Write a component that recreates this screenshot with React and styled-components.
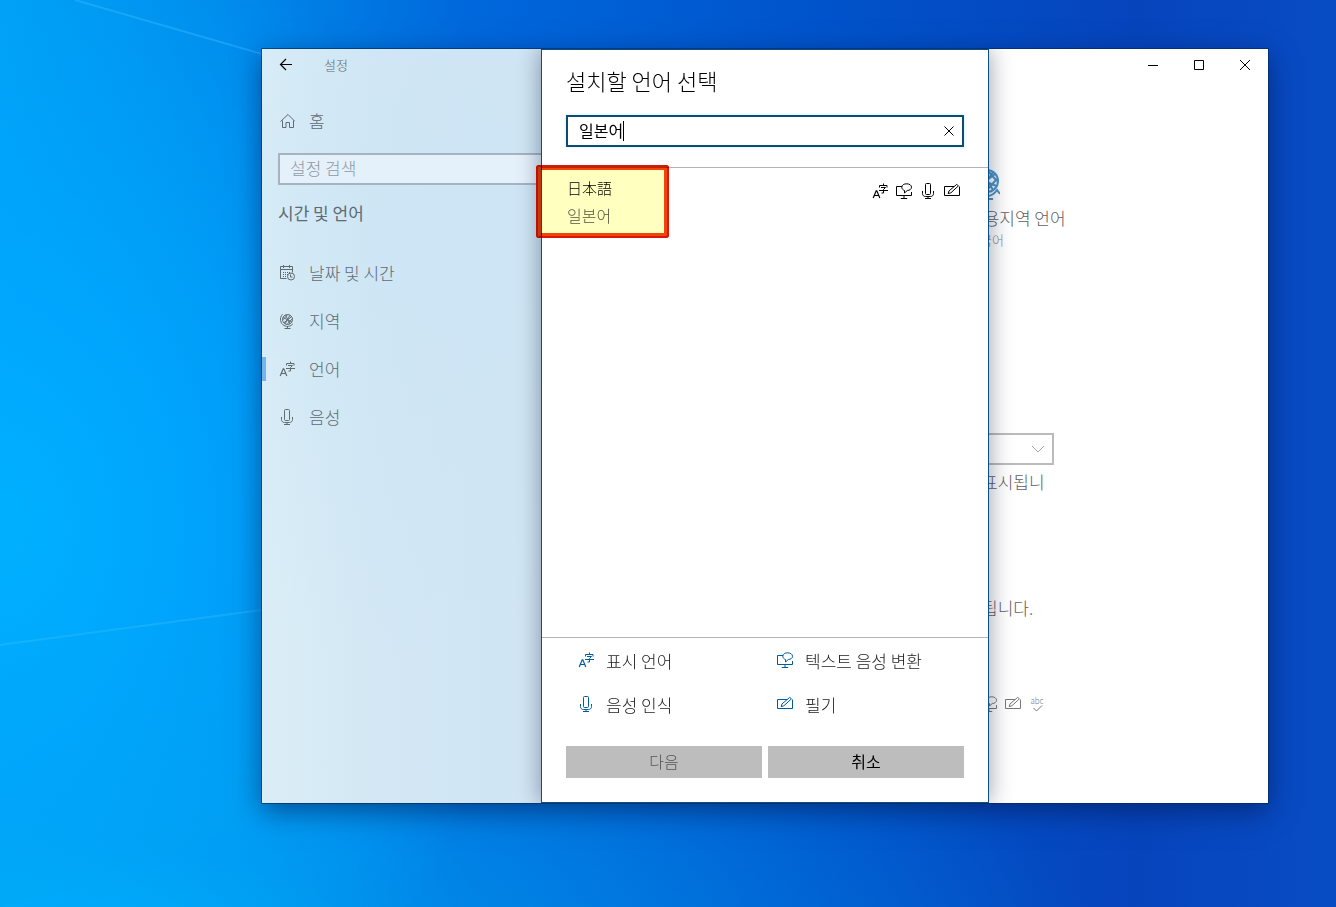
import React, { useState } from 'react';
import styled, { createGlobalStyle, css } from 'styled-components';

const GlobalStyle = createGlobalStyle`
  * {
    box-sizing: border-box;
  }
  body {
    margin: 0;
    font-family: 'Noto Sans CJK KR', 'Noto Sans', sans-serif;
    font-weight: 300;
  }
  button, input, select {
    font: inherit;
    color: inherit;
  }
`;

const flexCenter = css`
  display: flex;
  align-items: center;
`;

const plainButton = css`
  padding: 0;
  border: 0;
  background: none;
  cursor: pointer;
`;

const Desktop = styled.div`
  position: relative;
  display: flex;
  min-height: 100vh;
  padding: 49px 68px 104px 262px;
  background:
    radial-gradient(ellipse 520px 640px at 0% 58%, #00b0ff 0%, rgba(0, 168, 255, 0.85) 35%, rgba(0, 140, 245, 0) 100%),
    radial-gradient(ellipse 1100px 360px at 0% 106%, rgba(0, 184, 245, 0.95) 0%, rgba(0, 160, 240, 0.6) 35%, rgba(0, 120, 225, 0) 100%),
    linear-gradient(90deg, #00a0f4 0%, #0088ea 18%, #0068dc 35%, #0054cc 60%, #0644bc 85%, #084cc4 100%);
`;

const Rays = styled.svg`
  position: absolute;
  inset: 0;
  width: 100%;
  height: 100%;
`;

const Window = styled.div`
  position: relative;
  display: flex;
  flex: 1;
  background: #fff;
  box-shadow: 0 0 0 1px rgba(0, 40, 90, 0.6), 0 8px 26px rgba(0, 20, 70, 0.55);
`;

const Sidebar = styled.aside`
  flex: 0 0 320px;
  color: #606a73;
  background:
    radial-gradient(ellipse 320px 420px at 40% 25%, rgba(200, 228, 245, 0.5), rgba(200, 228, 245, 0)),
    linear-gradient(90deg, #dbeef7 0%, #d3e7f4 35%, #d0e5f4 75%, #d6e8f4 100%);
`;

const TitleBar = styled.div`
  ${flexCenter}
  height: 32px;
  font-size: 13px;
  justify-content: ${(props) => (props.$end ? 'flex-end' : 'flex-start')};
`;

const WindowTitle = styled.span`
  padding-bottom: 2px;
`;

const BackButton = styled.button`
  ${plainButton}
  ${flexCenter}
  justify-content: center;
  width: 48px;
  height: 32px;
  margin-right: 14px;
  color: #000;
`;

const CaptionButton = styled.button`
  ${plainButton}
  ${flexCenter}
  justify-content: center;
  width: 46px;
  height: 32px;
  color: #000;
`;

const NavItem = styled.a`
  ${flexCenter}
  gap: 14px;
  height: 48px;
  padding: 0 0 2px 17px;
  font-size: 17px;
  color: inherit;
  text-decoration: none;
  svg {
    margin-top: 2px;
  }
`;

const ActiveItem = styled(NavItem)`
  padding-left: 0;
  &::before {
    content: '';
    width: 4px;
    height: 24px;
    margin: 2px -1px 0 0;
    background: #78b4e4;
  }
`;

const HomeItem = styled(NavItem)`
  margin-top: 16px;
`;

const SearchBox = styled.input`
  display: block;
  width: 288px;
  height: 32px;
  margin: 8px 16px 0;
  padding: 0 10px 4px;
  border: 2px solid #a5b4c0;
  border-radius: 0;
  background: #e4f0fa;
  font-size: 17px;
  &::placeholder {
    color: #8f9aa5;
    opacity: 1;
  }
`;

const Heading = styled.h2`
  margin: 16px 16px 24px;
  font-size: 17px;
  font-weight: 400;
  line-height: 24px;
`;

const Main = styled.main`
  flex: 1;
  min-width: 0;
  color: #606060;
  font-size: 17px;
  line-height: 24px;
`;

const Content = styled.div`
  padding-left: 386px;
`;

const Tile = styled.div`
  padding-top: 87px;
  svg {
    display: block;
  }
`;

const TileLabel = styled.div`
  margin-top: 6px;
`;

const TileNote = styled.div`
  margin-top: 2px;
  font-size: 13px;
  line-height: 16px;
  color: #8c8c8c;
`;

const SelectWrap = styled.label`
  ${flexCenter}
  position: relative;
  width: 86px;
  margin-top: 185px;
  color: #aaa;
`;

const Select = styled.select`
  appearance: none;
  width: 100%;
  height: 32px;
  border: 2px solid #bbb;
  border-radius: 0;
  background: #fff;
`;

const SelectArrow = styled.span`
  ${flexCenter}
  position: absolute;
  right: 10px;
  pointer-events: none;
`;

const Paragraph = styled.p`
  margin: 0;
  padding: 5px 0 0 14px;
`;

const StatusParagraph = styled(Paragraph)`
  padding-top: 102px;
`;

const FeatureRow = styled.div`
  display: flex;
  gap: 8px;
  padding: 76px 0 0 13px;
  color: #777;
`;

const Overlay = styled.div`
  position: absolute;
  inset: 0;
  display: flex;
  justify-content: center;
  pointer-events: none;
`;

const Dialog = styled.section`
  display: flex;
  flex-direction: column;
  width: 448px;
  border: 1px solid #0c4f85;
  background: #fff;
  box-shadow: 0 0 22px rgba(0, 20, 50, 0.42);
  color: #222;
  font-size: 16px;
  pointer-events: auto;
  clip-path: inset(0 -30px);
`;

const DialogHead = styled.div`
  padding: 16px 24px 20px;
  border-bottom: 1px solid #b3b3b3;
`;

const DialogTitle = styled.h1`
  margin: 0 0 21px;
  font-size: 22px;
  font-weight: 300;
  line-height: 28px;
  color: #000;
`;

const Field = styled.div`
  ${flexCenter}
  height: 32px;
  padding-left: 11px;
  border: 2px solid #0f4a72;
  box-shadow: 0 0 3px #b8ecff;
  color: #000;
`;

const FieldInput = styled.input`
  field-sizing: content;
  min-width: 1px;
  padding: 0 0 2px;
  border: 0;
  outline: 0;
  background: none;
  font-weight: 400;
  caret-color: transparent;
`;

const Caret = styled.span`
  width: 1px;
  height: 20px;
  background: #000;
`;

const ClearButton = styled.button`
  ${plainButton}
  ${flexCenter}
  justify-content: center;
  width: 26px;
  height: 28px;
  margin-left: auto;
`;

const Results = styled.div`
  flex: 1;
`;

const ResultItem = styled.button`
  ${plainButton}
  position: relative;
  display: flex;
  justify-content: space-between;
  align-items: flex-start;
  width: 100%;
  padding: 6px 28px 6px 25px;
  text-align: left;
`;

const Native = styled.div`
  font-family: 'Noto Sans CJK JP', sans-serif;
  font-size: 15px;
  line-height: 28px;
  color: #000;
`;

const Local = styled.div`
  font-size: 16px;
  line-height: 26px;
  color: #555;
`;

const ResultIcons = styled.div`
  display: flex;
  gap: 8px;
  padding-top: 9px;
  color: #000;
`;

// marker drawn over the first result
const Highlight = styled.span`
  position: absolute;
  top: -3px;
  left: -6px;
  width: 133px;
  height: 73px;
  border: 5px solid #ee460a;
  border-radius: 3px;
  outline: 2px solid #dd1408;
  outline-offset: -2px;
  background: #ffffc0;
  background-clip: padding-box;
  mix-blend-mode: multiply;
`;

const Footer = styled.div`
  padding: 1px 24px 24px;
  border-top: 1px solid #b3b3b3;
`;

const Legend = styled.ul`
  display: grid;
  grid-template-columns: 1fr 1fr;
  margin: 0 0 19px;
  padding: 0;
  list-style: none;
  font-size: 17px;
`;

const LegendItem = styled.li`
  ${flexCenter}
  gap: 12px;
  height: 44px;
  padding: 0 0 2px 12px;
  white-space: nowrap;
  svg {
    color: #005a9e;
  }
`;

const Actions = styled.div`
  display: flex;
  gap: 6px;
`;

const ActionButton = styled.button`
  flex: 1;
  height: 32px;
  padding: 0 0 2px;
  border: 0;
  background: #bdbdbd;
  font-weight: 400;
  color: #000;
  cursor: pointer;
  &:disabled {
    font-weight: 300;
    color: #555;
    cursor: default;
  }
`;

const Icon = ({ size = 16, children, ...rest }) => (
  <svg
    width={size}
    height={size}
    viewBox='0 0 16 16'
    fill='none'
    stroke='currentColor'
    aria-hidden='true'
    {...rest}
  >
    {children}
  </svg>
);

const BackIcon = () => (
  <Icon strokeWidth='1.2'>
    <path d='M2.5 7.5H14M8 2L2.5 7.500 8 13' />
  </Icon>
);

const HomeIcon = () => (
  <Icon>
    <path d='M1.500 8.5L9 1.5l7 7M3.5 7.500v7h3.500V9.5h3.500v5h4v-7' />
  </Icon>
);

const CalendarIcon = () => (
  <Icon>
    <path d='M7.5 13.5h-6v-12h12v6M1.500 4.5h12M4.5 0v3M10.5 0v3' />
    <path d='M4 7.5h8M4 9.5h5M4 11.5h4' strokeDasharray='1 1' />
    <circle cx='12' cy='11.5' r='3.5' />
    <path d='M11.5 9.500v2.500h2' />
  </Icon>
);

const GlobeIcon = () => (
  <Icon>
    <circle cx='8.5' cy='6.5' r='5' />
    <path d='M4 4.5l9 4.5M5 9.7l7.5-6M6.500 2l4.5 9M11 2.2L6 11M3.7 7l5-5.4M8 11.400l5.3-5.6' />
    <path d='M3.500 1.2C0 5 1.3 10.4 5 12.5c3 1.6 6.5 1 8.800-1.5M8.5 13v2.5M5.5 15.5h6' />
  </Icon>
);

const BigGlobeIcon = () => (
  <Icon size={32} viewBox='0 0 32 32' stroke='#4f94cc' strokeWidth='2'>
    <circle cx='19' cy='13' r='11' />
    <path d='M8.500 10l20 8M10 19l17-13M14 3l11 19M25 4L13 22M17 24l12-13M19 2l10 11' />
    <path d='M5 4C-1 13 3 24 11 27c7 3 14 1 18-5l3 4M19 27v4M12 31h13' />
  </Icon>
);

const LanguageIcon = () => (
  <Icon>
    <path d='M1.200 15L4.200 7.800h.6L7.800 15M2.200 12.5h4.600' strokeWidth='1.2' />
    <path d='M11.500 .5v2M7.500 4.500v-2h7.500v2M9 4.500h4.500L11.500 6.500v3.500h-2M7 7.500h9' />
  </Icon>
);

const MicIcon = () => (
  <Icon>
    <rect x='5.5' y='.5' width='5' height='11' rx='1' />
    <path d='M2.500 8v2.500c0 1.800 1.200 3 3 3H10.500c1.800 0 3-1.200 3-3V8M8 13.5v2M5 15.500h6' />
  </Icon>
);

const SpeechIcon = () => (
  <Icon>
    <path d='M6 3.5H.5v9h15V9M8 12.500v3M4.800 15.500h6.400' />
    <path d='M8.500 10V7.500C7 7 5.800 5.800 5.800 4.200 5.800 2 8 .8 10.700 .8s4.800 1.400 4.800 3.400-1.800 3.200-4.200 3.300z' />
  </Icon>
);

const PenIcon = () => (
  <Icon>
    <path d='M10 3.500H.5v9h15V3.500M4.200 10.6l.8-2.700L12.700 1.400l1.700 1.500-7.500 6.900z' />
  </Icon>
);

const SpellIcon = () => (
  <Icon overflow='visible'>
    <text x='8' y='8' fontSize='8' textAnchor='middle' fill='currentColor' stroke='none'>
      abc
    </text>
    <path d='M4.500 12l3 3L13 9.500' />
  </Icon>
);

const features = [
  { name: '표시 언어', icon: LanguageIcon },
  { name: '텍스트 음성 변환', icon: SpeechIcon },
  { name: '음성 인식', icon: MicIcon },
  { name: '필기', icon: PenIcon },
];

export default function App() {
  const [keyword, setKeyword] = useState('일본어');

  return (
    <>
      <GlobalStyle />
      <Desktop>
        <Rays viewBox='0 0 1336 907' preserveAspectRatio='none' aria-hidden='true'>
          <path d='M75 0L262 54' stroke='#35b8ff' strokeOpacity='.45' strokeWidth='2' />
          <path d='M0 645L262 610' stroke='#4cc8ff' strokeOpacity='.3' strokeWidth='2' />
          <path d='M0 645L262 610V820L0 907z' fill='#00a8f0' fillOpacity='.15' />
        </Rays>
        <Window>
          <Sidebar>
            <TitleBar>
              <BackButton aria-label='뒤로'>
                <BackIcon />
              </BackButton>
              <WindowTitle>설정</WindowTitle>
            </TitleBar>
            <HomeItem href='#home'>
              <HomeIcon />홈
            </HomeItem>
            <SearchBox type='text' placeholder='설정 검색' aria-label='설정 검색' />
            <Heading>시간 및 언어</Heading>
            <nav>
              <NavItem href='#date'>
                <CalendarIcon />
                날짜 및 시간
              </NavItem>
              <NavItem href='#region'>
                <GlobeIcon />
                지역
              </NavItem>
              <ActiveItem href='#language'>
                <LanguageIcon />
                언어
              </ActiveItem>
              <NavItem href='#speech'>
                <MicIcon />
                음성
              </NavItem>
            </nav>
          </Sidebar>
          <Main>
            <TitleBar $end>
              <CaptionButton aria-label='최소화'>
                <Icon size={10} viewBox='0 0 10 10'>
                  <path d='M0 5.5h10' />
                </Icon>
              </CaptionButton>
              <CaptionButton aria-label='최대화'>
                <Icon size={10} viewBox='0 0 10 10'>
                  <path d='M.5 .5h9v9h-9z' />
                </Icon>
              </CaptionButton>
              <CaptionButton aria-label='닫기'>
                <Icon size={10} viewBox='0 0 10 10'>
                  <path d='M0 0l10 10M10 0L0 10' />
                </Icon>
              </CaptionButton>
            </TitleBar>
            <Content>
              <Tile>
                <BigGlobeIcon />
                <TileLabel>사용지역 언어</TileLabel>
                <TileNote>한국어</TileNote>
              </Tile>
              <SelectWrap>
                <Select aria-label='Windows 표시 언어' />
                <SelectArrow>
                  <Icon size={12} viewBox='0 0 12 12'>
                    <path d='M0 3l6 6 6-6' />
                  </Icon>
                </SelectArrow>
              </SelectWrap>
              <Paragraph>표시됩니</Paragraph>
              <StatusParagraph>됩니다.</StatusParagraph>
              <FeatureRow>
                <SpeechIcon />
                <PenIcon />
                <SpellIcon />
              </FeatureRow>
            </Content>
          </Main>
          <Overlay>
            <Dialog role='dialog' aria-labelledby='dialog-title'>
              <DialogHead>
                <DialogTitle id='dialog-title'>설치할 언어 선택</DialogTitle>
                <Field>
                  <FieldInput
                    type='text'
                    aria-label='언어 검색'
                    value={keyword}
                    onChange={(e) => setKeyword(e.target.value)}
                  />
                  <Caret />
                  <ClearButton aria-label='지우기' onClick={() => setKeyword('')}>
                    <Icon size={10} viewBox='0 0 10 10'>
                      <path d='M.5 .5l9 9M9.5 .5l-9 9' />
                    </Icon>
                  </ClearButton>
                </Field>
              </DialogHead>
              <Results>
                <ResultItem>
                  <div>
                    <Native lang='ja'>日本語</Native>
                    <Local>일본어</Local>
                  </div>
                  <ResultIcons>
                    <LanguageIcon />
                    <SpeechIcon />
                    <MicIcon />
                    <PenIcon />
                  </ResultIcons>
                  <Highlight />
                </ResultItem>
              </Results>
              <Footer>
                <Legend>
                  {features.map(({ name, icon: FeatureIcon }) => (
                    <LegendItem key={name}>
                      <FeatureIcon />
                      {name}
                    </LegendItem>
                  ))}
                </Legend>
                <Actions>
                  <ActionButton disabled>다음</ActionButton>
                  <ActionButton>취소</ActionButton>
                </Actions>
              </Footer>
            </Dialog>
          </Overlay>
        </Window>
      </Desktop>
    </>
  );
}
